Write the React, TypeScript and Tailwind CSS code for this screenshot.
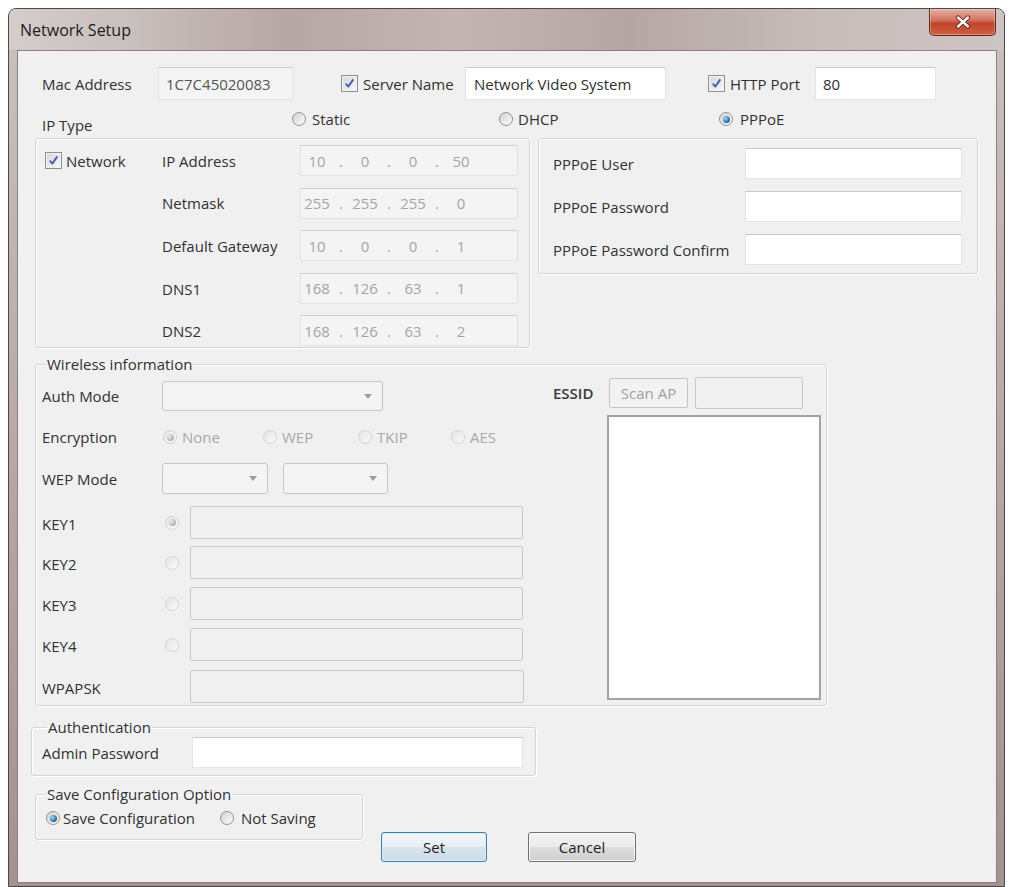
import { Fragment } from 'react'

const groupBox = 'rounded-[3px] border border-[#d5d5d5] shadow-[inset_1px_1px_0_#ffffff,1px_1px_0_#ffffff]'
const whiteField = 'border border-[#e4e4e4] border-t-[#c9c9c9] bg-white'
const grayField = 'rounded-[2px] border border-[#c8c8c8] bg-[#f0f0f0]'

function Check() {
  return (
    <span className="inline-flex h-[17px] w-[17px] shrink-0 items-center justify-center border border-[#8e8f8f] bg-[linear-gradient(135deg,#d9d9dc_0%,#f7f7f7_100%)] shadow-[inset_0_0_0_1px_#f4f4f4]">
      <svg width="11" height="11" viewBox="0 0 11 11">
        <path d="M1.8 5.6 L4.3 8.6 L9.3 1.4" fill="none" stroke="#4a5cb8" strokeWidth="1.9" strokeLinejoin="round" />
      </svg>
    </span>
  )
}

function Radio({ checked = false, disabled = false }: { checked?: boolean; disabled?: boolean }) {
  return (
    <span
      className={`inline-flex h-[14px] w-[14px] shrink-0 items-center justify-center rounded-full border ${
        disabled
          ? 'border-[#d3d3d3] bg-[linear-gradient(135deg,#e4e4e4,#fbfbfb)]'
          : 'border-[#939393] bg-[linear-gradient(135deg,#d2d2d2,#fcfcfc)]'
      }`}
    >
      {checked && (
        <span
          className={`h-[7px] w-[7px] rounded-full ${
            disabled
              ? 'bg-[radial-gradient(circle_at_35%_35%,#eeeeee,#a9a9a9_75%)]'
              : 'bg-[radial-gradient(circle_at_35%_35%,#9fdcff,#1d5f9c_70%)]'
          }`}
        />
      )}
    </span>
  )
}

function Combo({ className }: { className: string }) {
  return (
    <div className={`flex h-full items-center justify-end rounded-[3px] border border-[#c6c6c6] bg-[#f4f4f4] pr-[10px] ${className}`}>
      <svg width="8" height="5" viewBox="0 0 8 5">
        <path d="M0 0h8L4 5z" fill="#9d9d9d" />
      </svg>
    </div>
  )
}

function IpBox({ parts }: { parts: string[] }) {
  return (
    <div className="flex h-[31px] w-[218px] items-center border border-[#e3e3e3] border-t-[#cecece] bg-[#f4f4f4] text-[#a5a5a5]">
      {parts.map((p, i) => (
        <Fragment key={i}>
          {i > 0 && <span className="w-[16px] text-center">.</span>}
          <span className="w-[32px] text-center">{p}</span>
        </Fragment>
      ))}
    </div>
  )
}

const ipRows = [
  { label: 'IP Address', parts: ['10', '0', '0', '50'] },
  { label: 'Netmask', parts: ['255', '255', '255', '0'] },
  { label: 'Default Gateway', parts: ['10', '0', '0', '1'] },
  { label: 'DNS1', parts: ['168', '126', '63', '1'] },
  { label: 'DNS2', parts: ['168', '126', '63', '2'] },
]

const keyRows = [
  { label: 'KEY1', checked: true, mt: 'mt-[12px]' },
  { label: 'KEY2', checked: false, mt: 'mt-[7px]' },
  { label: 'KEY3', checked: false, mt: 'mt-[8px]' },
  { label: 'KEY4', checked: false, mt: 'mt-[8px]' },
]

export default function App() {
  return (
    <div className="h-[887px] w-[1009px] overflow-hidden bg-white pl-[8px] pt-[8px] font-['Open_Sans',sans-serif] text-[15px] leading-[20px] text-[#303030]">
      <div className="flex h-[879px] w-[997px] flex-col rounded-t-[8px] border border-[#4f4746] bg-[linear-gradient(180deg,#cac1bf_0%,#b8aba8_45%,#a29290_100%)]">
        {/* Title bar */}
        <div className="flex h-[41px] shrink-0 items-start justify-between rounded-t-[7px] bg-[linear-gradient(90deg,#d4cdcc_0%,#c9bfbd_12%,#b6a7a4_28%,#c2b5b2_45%,#b4a6a3_62%,#c6bbb9_80%,#cdc5c4_100%)]">
          <span className="ml-[11px] mt-[11px] text-[16px] leading-[20px] text-[#1a1a1a]">Network Setup</span>
          <div className="mr-[8px] flex h-[27px] w-[67px] items-center justify-center rounded-b-[5px] border border-t-0 border-[#5e2a24] bg-[linear-gradient(180deg,#e4b0a4_0%,#d27561_42%,#c1432b_55%,#d2603f_100%)] shadow-[inset_0_0_0_1px_rgba(255,255,255,0.3)]">
            <svg width="16" height="14" viewBox="0 0 16 14">
              <path d="M3 2.5 L13 11.5 M13 2.5 L3 11.5" stroke="#5a2018" strokeWidth="4.2" strokeLinecap="round" />
              <path d="M3 2.5 L13 11.5 M13 2.5 L3 11.5" stroke="#ffffff" strokeWidth="2.4" strokeLinecap="round" />
            </svg>
          </div>
        </div>

        {/* Client area */}
        <div className="ml-[8px] h-[833px] w-[980px] shrink-0 border border-[#8b817f] bg-[#f0f0f0] pt-[16px]">
          {/* Mac / Server name / HTTP port */}
          <div className="flex h-[33px] items-center pl-[24px]">
            <span className="w-[116px]">Mac Address</span>
            <div className="flex h-[33px] w-[135px] items-center border border-[#e3e3e3] border-t-[#cecece] bg-[#f4f4f4] pl-[7px] text-[#555555]">
              1C7C45020083
            </div>
            <div className="ml-[48px] flex w-[124px] items-center">
              <Check />
              <span className="ml-[5px]">Server Name</span>
            </div>
            <div className={`flex h-[33px] w-[201px] items-center pl-[8px] ${whiteField}`}>Network Video System</div>
            <div className="ml-[42px] flex w-[107px] items-center">
              <Check />
              <span className="ml-[5px]">HTTP Port</span>
            </div>
            <div className={`flex h-[33px] w-[121px] items-center pl-[7px] ${whiteField}`}>80</div>
          </div>

          {/* IP type */}
          <div className="flex h-[38px] items-start pl-[24px]">
            <span className="mt-[15px] w-[250px]">IP Type</span>
            <div className="mt-[9px] flex w-[207px] items-center">
              <Radio />
              <span className="ml-[6px]">Static</span>
            </div>
            <div className="mt-[9px] flex w-[220px] items-center">
              <Radio />
              <span className="ml-[5px]">DHCP</span>
            </div>
            <div className="mt-[9px] flex items-center">
              <Radio checked />
              <span className="ml-[7px]">PPPoE</span>
            </div>
          </div>

          {/* Network + PPPoE groups */}
          <div className="flex items-start gap-[8px] pl-[17px]">
            <div className={`flex h-[210px] w-[495px] pl-[9px] pt-[6px] ${groupBox}`}>
              <div className="mt-[7px] flex h-[17px] w-[117px] items-center">
                <Check />
                <span className="ml-[4px]">Network</span>
              </div>
              <div className="grid grid-cols-[138px_218px] gap-y-[11px]">
                {ipRows.map((r) => (
                  <Fragment key={r.label}>
                    <span className="flex items-center">{r.label}</span>
                    <IpBox parts={r.parts} />
                  </Fragment>
                ))}
              </div>
            </div>
            <div className={`h-[136px] w-[440px] pl-[14px] pt-[9px] ${groupBox}`}>
              <div className="grid grid-cols-[192px_217px] gap-y-[12px]">
                {['PPPoE User', 'PPPoE Password', 'PPPoE Password Confirm'].map((l) => (
                  <Fragment key={l}>
                    <span className="flex items-center">{l}</span>
                    <div className={`h-[31px] ${whiteField}`} />
                  </Fragment>
                ))}
              </div>
            </div>
          </div>

          {/* Wireless information */}
          <fieldset className={`ml-[17px] mt-[6px] w-[792px] pb-[2px] pl-[6px] ${groupBox}`}>
            <legend className="ml-[4px] px-[1px]">Wireless information</legend>
            <div className="flex items-start">
              <div className="w-[482px]">
                <div className="mt-[7px] flex h-[30px] items-center">
                  <span className="w-[120px]">Auth Mode</span>
                  <Combo className="w-[221px]" />
                </div>
                <div className="mt-[11px] flex h-[30px] items-center text-[#a8a8a8]">
                  <span className="w-[121px] text-[#303030]">Encryption</span>
                  <div className="flex w-[100px] items-center">
                    <Radio checked disabled />
                    <span className="ml-[5px]">None</span>
                  </div>
                  <div className="flex w-[95px] items-center">
                    <Radio disabled />
                    <span className="ml-[5px]">WEP</span>
                  </div>
                  <div className="flex w-[93px] items-center">
                    <Radio disabled />
                    <span className="ml-[5px]">TKIP</span>
                  </div>
                  <div className="flex items-center">
                    <Radio disabled />
                    <span className="ml-[5px]">AES</span>
                  </div>
                </div>
                <div className="mt-[11px] flex h-[31px] items-center">
                  <span className="w-[120px]">WEP Mode</span>
                  <Combo className="w-[106px]" />
                  <div className="ml-[15px] h-full">
                    <Combo className="w-[105px]" />
                  </div>
                </div>
                {keyRows.map((k) => (
                  <div key={k.label} className={`flex h-[33px] items-center ${k.mt}`}>
                    <span className="w-[123px] pt-[3px]">{k.label}</span>
                    <Radio checked={k.checked} disabled />
                    <div className={`ml-[11px] h-[33px] w-[333px] ${grayField}`} />
                  </div>
                ))}
                <div className="mt-[9px] flex h-[33px] items-center">
                  <span className="w-[148px] pt-[3px]">WPAPSK</span>
                  <div className={`h-[33px] w-[334px] ${grayField}`} />
                </div>
              </div>
              <div className="ml-[29px] mt-[3px]">
                <div className="flex items-center">
                  <span className="w-[56px] font-semibold text-[#3a3a3a]">ESSID</span>
                  <div className="flex h-[30px] w-[79px] items-center justify-center rounded-[2px] border border-[#c4c4c4] bg-[#f2f2f2] text-[#a0a0a0]">
                    Scan AP
                  </div>
                  <div className={`ml-[7px] h-[32px] w-[108px] ${grayField}`} />
                </div>
                <div className="ml-[54px] mt-[6px] h-[285px] w-[214px] border-2 border-[#a3a3a3] bg-white" />
              </div>
            </div>
          </fieldset>

          {/* Authentication */}
          <fieldset className={`ml-[13px] mt-[11px] w-[505px] pb-[7px] pl-[10px] ${groupBox}`}>
            <legend className="ml-[5px] px-[1px]">Authentication</legend>
            <div className="flex h-[31px] items-center">
              <span className="w-[150px]">Admin Password</span>
              <div className={`h-[31px] w-[331px] ${whiteField}`} />
            </div>
          </fieldset>

          {/* Save option + buttons */}
          <div className="flex items-start">
            <fieldset className={`ml-[17px] mt-[8px] w-[328px] pb-[11px] pl-[10px] ${groupBox}`}>
              <legend className="px-[1px]">Save Configuration Option</legend>
              <div className="mt-[4px] flex items-center">
                <div className="flex w-[174px] items-center">
                  <Radio checked />
                  <span className="ml-[3px]">Save Configuration</span>
                </div>
                <Radio />
                <span className="ml-[7px]">Not Saving</span>
              </div>
            </fieldset>
            <button className="ml-[18px] mt-[56px] h-[30px] w-[106px] rounded-[3px] border border-[#3c7fb1] bg-[linear-gradient(180deg,#f2f7fa_0%,#e7eff4_50%,#d7e4ec_51%,#cbdbe5_100%)] text-[#1e1e1e] shadow-[inset_0_0_0_1px_#d6f0fc]">
              Set
            </button>
            <button className="ml-[41px] mt-[56px] h-[30px] w-[108px] rounded-[3px] border border-[#707070] bg-[linear-gradient(180deg,#f2f2f2_0%,#ebebeb_50%,#dddddd_51%,#cfcfcf_100%)] text-[#1e1e1e] shadow-[inset_0_0_0_1px_#fafafa]">
              Cancel
            </button>
          </div>
        </div>
      </div>
    </div>
  )
}
